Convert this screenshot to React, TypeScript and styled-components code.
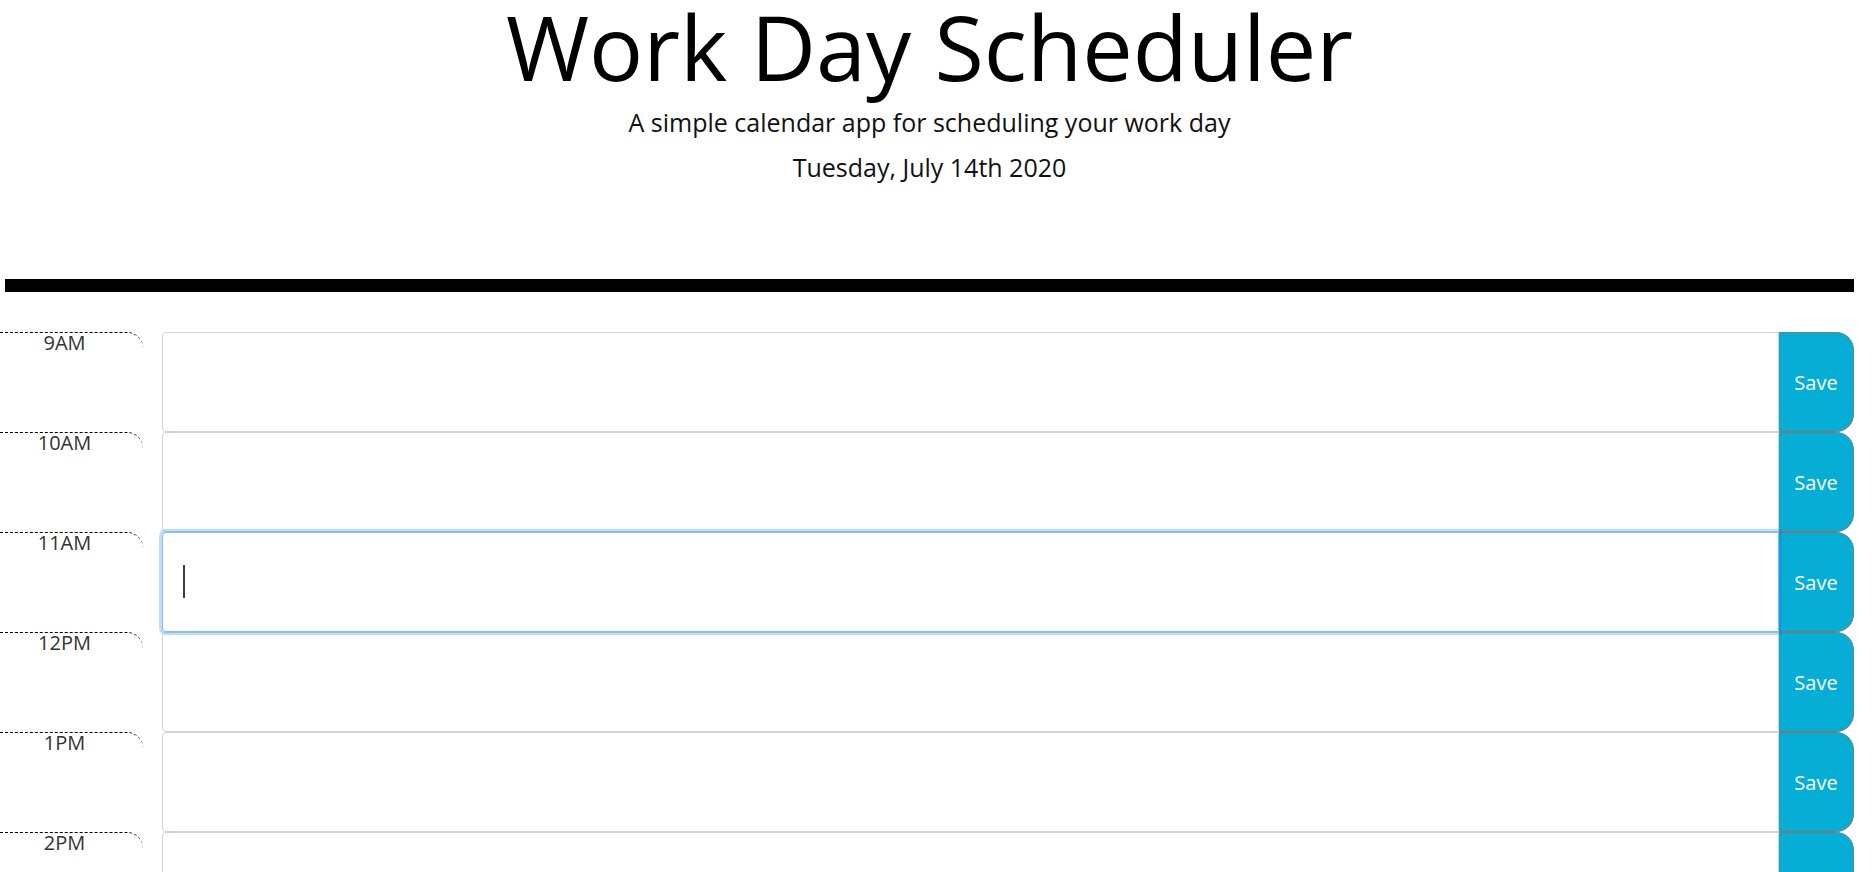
import styled, { createGlobalStyle } from "styled-components";

const hours = ["9AM", "10AM", "11AM", "12PM", "1PM", "2PM", "3PM", "4PM", "5PM"];

// the hour that has the cursor in it
const ACTIVE = "11AM";

export default function App() {
    return (
        <>
            <GlobalStyle />
            <Page>
                <Header>
                    <Title>Work Day Scheduler</Title>
                    <Lead>A simple calendar app for scheduling your work day</Lead>
                    <CurrentDay>Tuesday, July 14th 2020</CurrentDay>
                </Header>
                <Blocks>
                    {hours.map((hour) => (
                        <Row key={hour}>
                            <Hour>{hour}</Hour>
                            <NoteWrap>
                                <Note $active={hour === ACTIVE} />
                                {hour === ACTIVE && <Caret />}
                            </NoteWrap>
                            <SaveBtn>Save</SaveBtn>
                        </Row>
                    ))}
                </Blocks>
            </Page>
        </>
    );
}

// styled components
const GlobalStyle = createGlobalStyle`
    html {
        scrollbar-width: none;
    }
    html::-webkit-scrollbar {
        display: none;
    }
    body {
        margin: 0;
        background: #fff;
        font-family: "Open Sans", "Liberation Sans", sans-serif;
        color: #212529;
    }
    * {
        box-sizing: border-box;
    }
`;

const Page = styled.div`
    margin-right: 17px;
    padding-top: 1px;
`;

const Header = styled.header`
    margin: 0 5px;
    padding-bottom: 97px;
    border-bottom: 13px solid #000;
    text-align: center;
`;

const Title = styled.h1`
    margin: 0;
    font-size: 90px;
    font-weight: 400;
    line-height: 1;
    color: #000;
`;

const Lead = styled.p`
    margin: 16px 0 0;
    font-size: 25px;
    font-weight: 400;
    line-height: 30px;
    color: #111;
`;

const CurrentDay = styled(Lead)`
    margin-top: 15px;
`;

const Blocks = styled.div`
    margin-top: 40px;
    padding-right: 5px;
`;

const Row = styled.div`
    display: flex;
    height: 100px;
`;

const Hour = styled.div`
    flex: 0 0 143px;
    margin-right: 19px;
    padding-right: 14px;
    border-top: 1px dashed #000;
    border-top-right-radius: 16px;
    text-align: center;
    font-size: 20px;
    line-height: 19px;
    color: #333;
`;

const NoteWrap = styled.div`
    position: relative;
    flex: 1;
    display: flex;
`;

const Note = styled.textarea<{ $active?: boolean }>`
    flex: 1;
    margin: 0;
    padding: 6px 12px;
    resize: none;
    font-family: "Open Sans", sans-serif;
    font-size: 16px;
    background: #fff;
    border: 1px solid ${(p) => (p.$active ? "#80bdff" : "#ced4da")};
    border-radius: 4px 0 0 4px;
    outline: none;
    caret-color: transparent;
    position: relative;
    z-index: ${(p) => (p.$active ? 2 : 0)};
    box-shadow: ${(p) => (p.$active ? "0 0 0 3px rgba(0, 123, 255, 0.25)" : "none")};
`;

const Caret = styled.span`
    position: absolute;
    left: 21px;
    top: 33px;
    width: 2px;
    height: 33px;
    background: #3a3f44;
    z-index: 3;
`;

const SaveBtn = styled.button`
    flex: 0 0 75px;
    position: relative;
    z-index: 1;
    padding: 0;
    background: #06aed5;
    color: #fff;
    font-family: "Open Sans", sans-serif;
    font-size: 20px;
    font-weight: 500;
    border: 1px solid #7a7a7a;
    border-left: none;
    border-radius: 0 18px 18px 0;
    cursor: pointer;
`;
